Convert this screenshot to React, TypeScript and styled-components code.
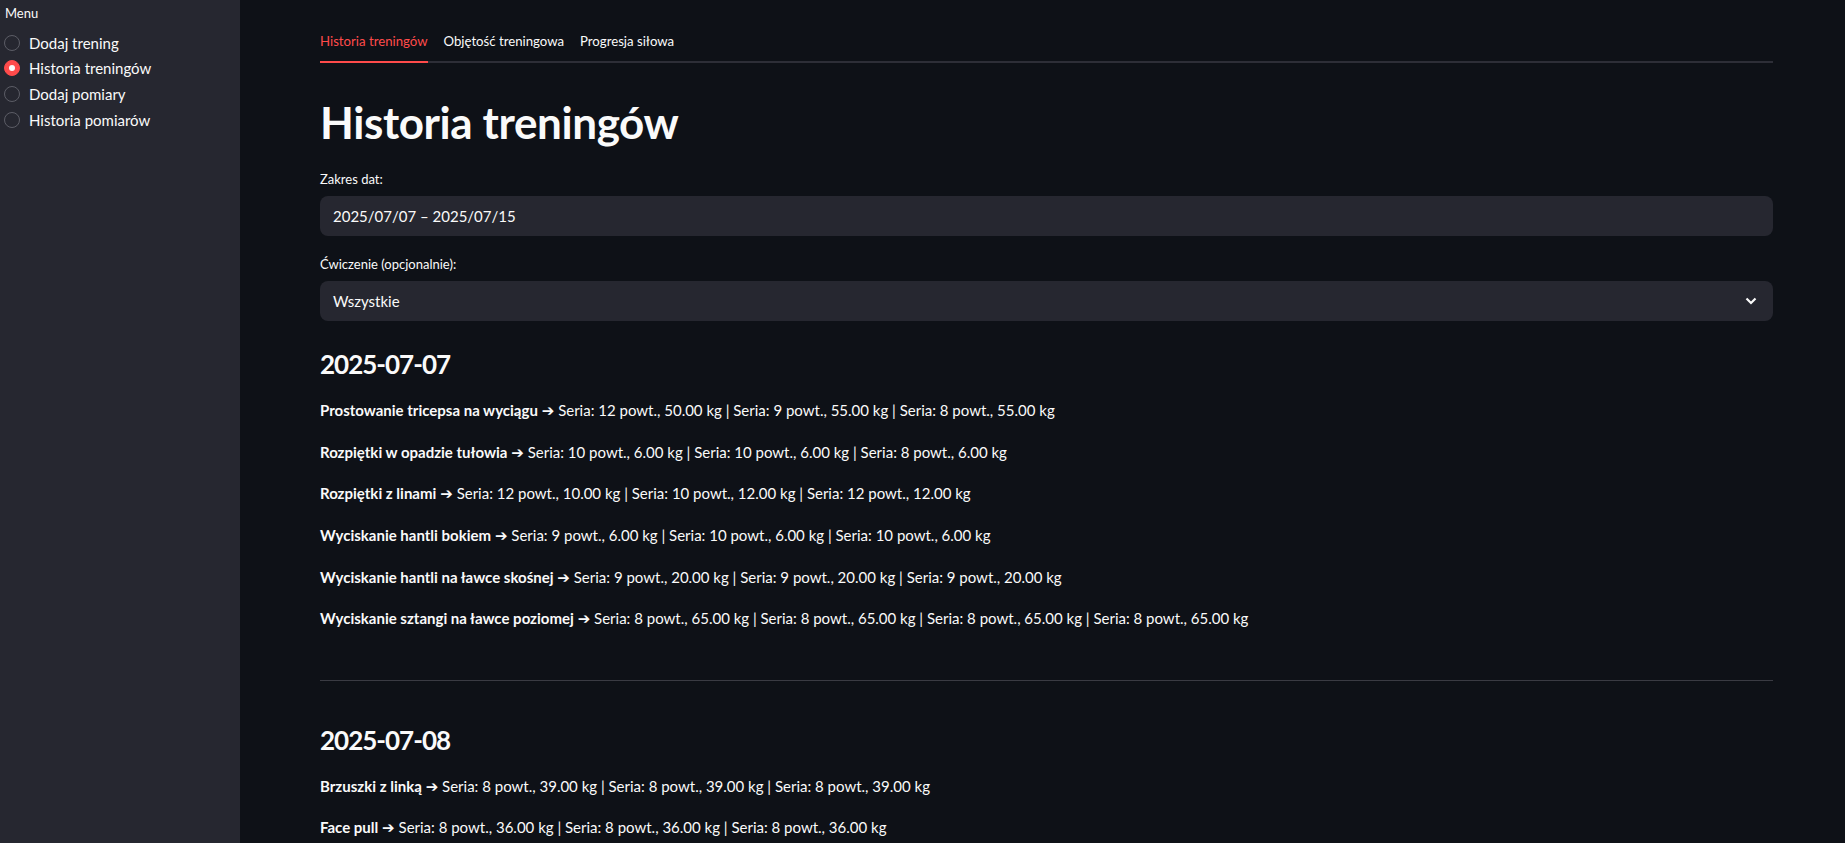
import React from "react";
import styled, { createGlobalStyle } from "styled-components";

const GlobalStyle = createGlobalStyle`
  html, body {
    margin: 0;
    height: 100%;
    overflow: hidden;
  }

  body {
    background: #0e1117;
    color: #fafafa;
    font-family: Lato, "DejaVu Sans", sans-serif;
  }
`;

type Workout = {
  date: string;
  exercises: { name: string; sets: string[] }[];
};

const history: Workout[] = [
  {
    date: "2025-07-07",
    exercises: [
      {
        name: "Prostowanie tricepsa na wyciągu",
        sets: ["12 powt., 50.00 kg", "9 powt., 55.00 kg", "8 powt., 55.00 kg"],
      },
      {
        name: "Rozpiętki w opadzie tułowia",
        sets: ["10 powt., 6.00 kg", "10 powt., 6.00 kg", "8 powt., 6.00 kg"],
      },
      {
        name: "Rozpiętki z linami",
        sets: ["12 powt., 10.00 kg", "10 powt., 12.00 kg", "12 powt., 12.00 kg"],
      },
      {
        name: "Wyciskanie hantli bokiem",
        sets: ["9 powt., 6.00 kg", "10 powt., 6.00 kg", "10 powt., 6.00 kg"],
      },
      {
        name: "Wyciskanie hantli na ławce skośnej",
        sets: ["9 powt., 20.00 kg", "9 powt., 20.00 kg", "9 powt., 20.00 kg"],
      },
      {
        name: "Wyciskanie sztangi na ławce poziomej",
        sets: [
          "8 powt., 65.00 kg",
          "8 powt., 65.00 kg",
          "8 powt., 65.00 kg",
          "8 powt., 65.00 kg",
        ],
      },
    ],
  },
  {
    date: "2025-07-08",
    exercises: [
      {
        name: "Brzuszki z linką",
        sets: ["8 powt., 39.00 kg", "8 powt., 39.00 kg", "8 powt., 39.00 kg"],
      },
      {
        name: "Face pull",
        sets: ["8 powt., 36.00 kg", "8 powt., 36.00 kg", "8 powt., 36.00 kg"],
      },
    ],
  },
];

const menu = ["Dodaj trening", "Historia treningów", "Dodaj pomiary", "Historia pomiarów"];
const tabs = ["Historia treningów", "Objętość treningowa", "Progresja siłowa"];

const App = () => {
  return (
    <>
      <GlobalStyle />
      <Layout>
        <Sidebar>
          <MenuLabel>Menu</MenuLabel>
          <RadioGroup>
            {menu.map((item) => (
              <RadioItem key={item}>
                <RadioDot $checked={item === "Historia treningów"} />
                {item}
              </RadioItem>
            ))}
          </RadioGroup>
        </Sidebar>

        <Main>
          <TabList>
            {tabs.map((tab, i) => (
              <Tab key={tab} $active={i === 0}>
                {tab}
              </Tab>
            ))}
          </TabList>

          <Title>Historia treningów</Title>

          <FieldLabel>Zakres dat:</FieldLabel>
          <InputBox>2025/07/07 – 2025/07/15</InputBox>

          <FieldLabel $spaced>Ćwiczenie (opcjonalnie):</FieldLabel>
          <InputBox>
            Wszystkie
            <svg width="12" height="8" viewBox="0 0 12 8">
              <path
                d="M1.5 1.5L6 6L10.5 1.5"
                fill="none"
                stroke="#fafafa"
                strokeWidth="2.2"
              />
            </svg>
          </InputBox>

          <Days>
            {history.map((day, i) => (
              <React.Fragment key={day.date}>
                {i > 0 && <Divider />}
                <DayHeading>{day.date}</DayHeading>
                <Entries>
                  {day.exercises.map((ex) => (
                    <Entry key={ex.name}>
                      <strong>{ex.name}</strong> ➔{" "}
                      {ex.sets.map((s) => `Seria: ${s}`).join(" | ")}
                    </Entry>
                  ))}
                </Entries>
              </React.Fragment>
            ))}
          </Days>
        </Main>
      </Layout>
    </>
  );
};

export default App;

const Layout = styled.div`
  display: flex;
  min-height: 100vh;
`;

const Sidebar = styled.aside`
  flex: 0 0 240px;
  background: #262730;
  padding: 3px 0 0 4px;
  box-sizing: border-box;
`;

const MenuLabel = styled.div`
  font-size: 13px;
  line-height: 20px;
  padding-left: 1px;
`;

const RadioGroup = styled.div`
  display: flex;
  flex-direction: column;
  margin-top: 7px;
`;

const RadioItem = styled.label`
  display: flex;
  align-items: center;
  gap: 9px;
  height: 25.6px;
  font-size: 15px;
`;

const RadioDot = styled.span<{ $checked?: boolean }>`
  width: 16px;
  height: 16px;
  border-radius: 50%;
  box-sizing: border-box;
  display: flex;
  align-items: center;
  justify-content: center;
  border: 1.5px solid ${(p) => (p.$checked ? "#ff4b4b" : "#5c5d66")};
  background: ${(p) => (p.$checked ? "#ff4b4b" : "transparent")};

  &::after {
    content: "";
    width: 6px;
    height: 6px;
    border-radius: 50%;
    background: #fafafa;
    display: ${(p) => (p.$checked ? "block" : "none")};
  }
`;

const Main = styled.main`
  flex: 1;
  min-width: 0;
  padding: 21px 72px 0 80px;
`;

const TabList = styled.div`
  display: flex;
  gap: 16px;
  border-bottom: 2px solid #2d2e37;
`;

const Tab = styled.div<{ $active?: boolean }>`
  height: 40px;
  display: flex;
  align-items: center;
  font-size: 13.2px;
  color: ${(p) => (p.$active ? "#ff4b4b" : "#fafafa")};
  border-bottom: 2px solid ${(p) => (p.$active ? "#ff4b4b" : "transparent")};
  margin-bottom: -2px;
`;

const Title = styled.h1`
  margin: 33px 0 0;
  font-size: 44px;
  line-height: 52.8px;
  font-weight: 700;
  letter-spacing: -0.4px;
`;

const FieldLabel = styled.div<{ $spaced?: boolean }>`
  margin: ${(p) => (p.$spaced ? "18px" : "20px")} 0 7px;
  font-size: 13px;
  line-height: 20px;
`;

const InputBox = styled.div`
  height: 40px;
  box-sizing: border-box;
  display: flex;
  align-items: center;
  justify-content: space-between;
  padding: 0 16px 0 13px;
  border-radius: 8px;
  background: #262730;
  font-size: 15px;
`;

const Days = styled.div`
  margin-top: 28.6px;
`;

const DayHeading = styled.h3`
  margin: 0;
  font-size: 26px;
  line-height: 31.2px;
  font-weight: 700;
  letter-spacing: -1px;
`;

const Entries = styled.div`
  display: flex;
  flex-direction: column;
  gap: 16px;
  margin-top: 17.6px;
`;

const Entry = styled.p`
  margin: 0;
  font-size: 15px;
  line-height: 25.6px;

  strong {
    font-weight: 700;
  }
`;

const Divider = styled.hr`
  margin: 48px 0 44.3px;
  border: none;
  border-top: 1px solid #3a3b43;
`;
